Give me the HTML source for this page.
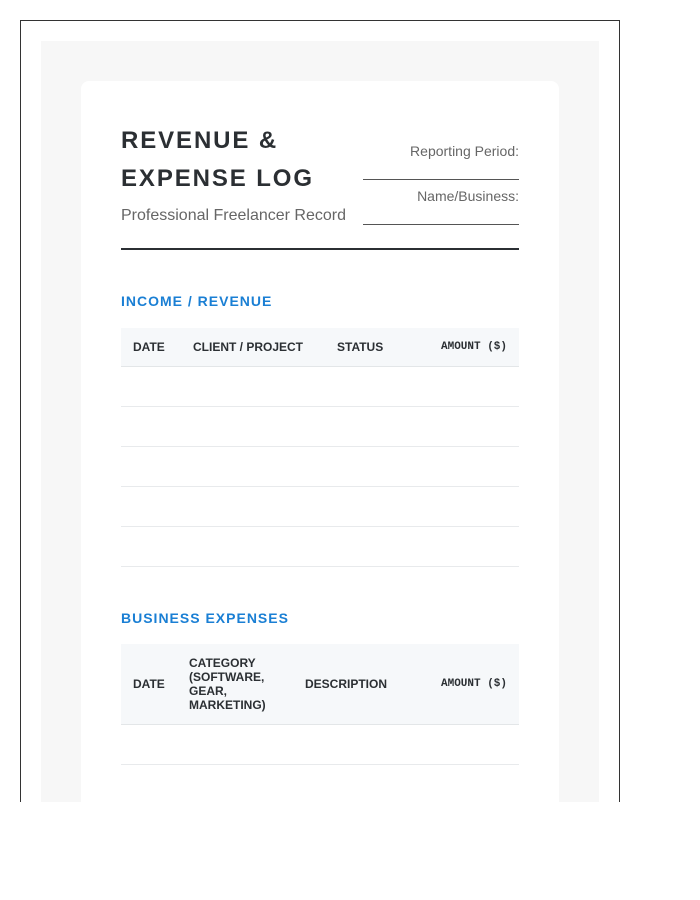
<!DOCTYPE html>
<html><head><meta charset="utf-8">
<style>
*{margin:0;padding:0;box-sizing:border-box}
html,body{width:700px;height:900px;background:#fff;overflow:hidden;font-family:"Liberation Sans",Arial,sans-serif}
#frame{position:absolute;left:20px;top:20px;width:600px;height:782px;border:1px solid #333;border-bottom:none;overflow:hidden;background:#fff}
#gray{position:absolute;left:20px;top:20px;width:558px;height:800px;background:#f7f7f7}
#card{position:absolute;left:60px;top:60px;width:478px;height:800px;background:#fff;border-radius:8px}
.a{position:absolute;white-space:nowrap}
.title{left:100px;font-size:24px;font-weight:bold;letter-spacing:1.9px;color:#2b2f33}
.sub{left:100px;top:186px;font-size:16px;color:#666}
.lbl{right:100px;font-size:14px;color:#666;text-align:right}
.uline{position:absolute;left:342px;width:156px;height:1px;background:#555}
.rule{position:absolute;left:100px;width:398px;height:2px;background:#2b2f33;top:227px}
.sec{left:100px;font-size:14px;font-weight:bold;letter-spacing:1px;color:#1a7fd4}
.thead{position:absolute;left:100px;width:398px;background:#f6f8fa;border-bottom:1px solid #e3e6e8}
.th{position:absolute;font-size:12px;font-weight:bold;color:#2b2f33;white-space:nowrap}
.mono{font-family:"Liberation Mono",monospace;font-size:11px}
.row{position:absolute;left:100px;width:398px;height:1px;background:#e8eaec}
</style></head><body>
<div id="frame">
<div id="gray"></div>
<div id="card"></div>
<div class="a title" style="top:106px">REVENUE &amp;</div>
<div class="a title" style="top:144px">EXPENSE LOG</div>
<div class="a sub">Professional Freelancer Record</div>
<div class="a lbl" style="top:122px">Reporting Period:</div>
<div class="uline" style="top:158px"></div>
<div class="a lbl" style="top:167px">Name/Business:</div>
<div class="uline" style="top:203px"></div>
<div class="rule"></div>

<div class="a sec" style="top:272px">INCOME / REVENUE</div>
<div class="thead" style="top:307px;height:39px">
<div class="th" style="left:12px;top:12px">DATE</div>
<div class="th" style="left:72px;top:12px">CLIENT / PROJECT</div>
<div class="th" style="left:216px;top:12px">STATUS</div>
<div class="th mono" style="left:320px;top:13px">AMOUNT ($)</div>
</div>
<div class="row" style="top:385px"></div>
<div class="row" style="top:425px"></div>
<div class="row" style="top:465px"></div>
<div class="row" style="top:505px"></div>
<div class="row" style="top:545px"></div>

<div class="a sec" style="top:589px">BUSINESS EXPENSES</div>
<div class="thead" style="top:623px;height:81px">
<div class="th" style="left:12px;top:33px">DATE</div>
<div class="th" style="left:68px;top:12px;line-height:14px">CATEGORY<br>(SOFTWARE,<br>GEAR,<br>MARKETING)</div>
<div class="th" style="left:184px;top:33px">DESCRIPTION</div>
<div class="th mono" style="left:320px;top:34px">AMOUNT ($)</div>
</div>
<div class="row" style="top:743px"></div>
</div>
</body></html>
